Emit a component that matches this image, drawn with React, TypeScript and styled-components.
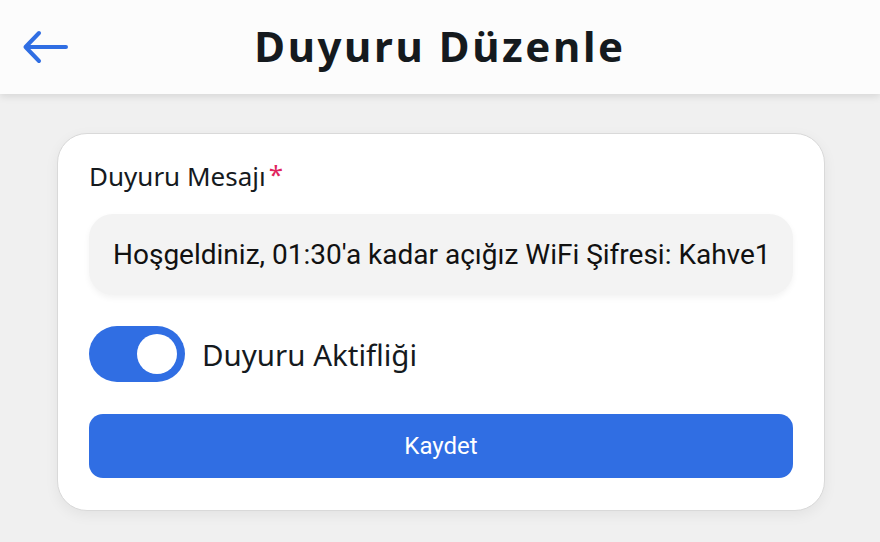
import React, { useState } from "react";
import styled, { createGlobalStyle } from "styled-components";

const Global = createGlobalStyle`
  html, body { margin: 0; padding: 0; }
  body {
    background: #f0f0f0;
    width: 880px;
    height: 542px;
    overflow: hidden;
    font-family: "Noto Sans", "Open Sans", sans-serif;
  }
  * { box-sizing: border-box; }
`;

const Page = styled.div`
  width: 880px;
  height: 542px;
  display: flex;
  flex-direction: column;
  background: #f0f0f0;
`;

const Header = styled.header`
  height: 94px;
  background: #fcfcfc;
  display: grid;
  grid-template-columns: 1fr auto 1fr;
  align-items: center;
  padding: 0 21px;
  box-shadow: 0 2px 8px rgba(0, 0, 0, 0.12);
  position: relative;
  z-index: 1;
`;

const BackButton = styled.button`
  width: 50px;
  height: 40px;
  border: none;
  background: none;
  padding: 0;
  display: flex;
  align-items: center;
  justify-self: start;
  cursor: pointer;
`;

const Title = styled.h1`
  margin: 0;
  font-family: "Noto Sans", sans-serif;
  font-weight: 700;
  font-size: 42px;
  letter-spacing: 2.6px;
  color: #151a1e;
  line-height: 1;
  padding-bottom: 2px;
`;

const Content = styled.main`
  padding: 39px 55px 0 57px;
`;

const Card = styled.section`
  background: #ffffff;
  border: 1px solid #d9d9d9;
  border-radius: 30px;
  padding: 27px 31px 32px;
  box-shadow: 0 4px 14px rgba(0, 0, 0, 0.06);
  display: flex;
  flex-direction: column;
`;

const Label = styled.label`
  font-family: "Noto Sans", sans-serif;
  font-size: 26px;
  color: #151a1e;
  line-height: 30px;
  display: flex;
  align-items: flex-start;
  gap: 3px;
`;

const Required = styled.span`
  color: #e0245e;
  font-size: 26px;
  line-height: 26px;
`;

const Input = styled.div`
  margin-top: 23px;
  height: 81px;
  background: #f3f3f3;
  border-radius: 24px;
  padding: 0 24px;
  display: flex;
  align-items: center;
  font-family: Roboto, sans-serif;
  font-size: 28px;
  color: #111;
  box-shadow: 0 3px 6px rgba(0, 0, 0, 0.05);
  white-space: nowrap;
  overflow: hidden;
`;

const ToggleRow = styled.div`
  margin-top: 31px;
  display: flex;
  align-items: center;
  gap: 17px;
`;

const Track = styled.button<{ $on: boolean }>`
  width: 96px;
  height: 56px;
  border-radius: 28px;
  border: none;
  padding: 0 8px;
  background: ${(p) => (p.$on ? "#306ee3" : "#c8c8c8")};
  display: flex;
  align-items: center;
  justify-content: ${(p) => (p.$on ? "flex-end" : "flex-start")};
  cursor: pointer;
`;

const Knob = styled.span`
  width: 40px;
  height: 40px;
  border-radius: 50%;
  background: #ffffff;
`;

const ToggleLabel = styled.span`
  font-family: "Noto Sans", sans-serif;
  font-size: 29.5px;
  color: #151a1e;
`;

const SaveButton = styled.button`
  margin-top: 32px;
  height: 64px;
  border: none;
  border-radius: 14px;
  background: #306ee3;
  color: #ffffff;
  font-family: Roboto, sans-serif;
  font-weight: 400;
  font-size: 24px;
  cursor: pointer;
`;

export default function App() {
  const [on, setOn] = useState(true);
  return (
    <Page>
      <Global />
      <Header>
        <BackButton aria-label="Geri">
          <svg width="50" height="40" viewBox="0 0 50 40" fill="none">
            <path
              d="M4.5 20H45M18 6L4.5 20L18 34"
              stroke="#306ee3"
              strokeWidth="4"
              strokeLinecap="round"
              strokeLinejoin="round"
            />
          </svg>
        </BackButton>
        <Title>Duyuru Düzenle</Title>
        <span />
      </Header>
      <Content>
        <Card>
          <Label>
            Duyuru Mesajı<Required>*</Required>
          </Label>
          <Input>Hoşgeldiniz, 01:30'a kadar açığız WiFi Şifresi: Kahve1</Input>
          <ToggleRow>
            <Track $on={on} onClick={() => setOn(!on)} aria-pressed={on}>
              <Knob />
            </Track>
            <ToggleLabel>Duyuru Aktifliği</ToggleLabel>
          </ToggleRow>
          <SaveButton>Kaydet</SaveButton>
        </Card>
      </Content>
    </Page>
  );
}
